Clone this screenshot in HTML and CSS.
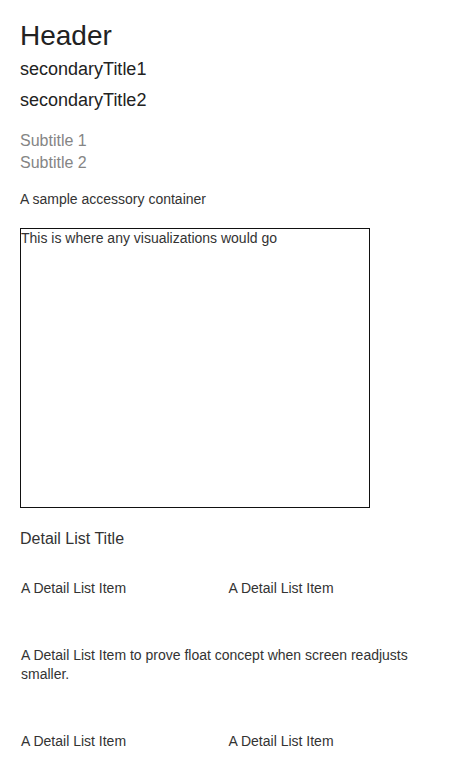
FILE: index.html
```html
<!DOCTYPE html>
<html>
<head>
<meta charset="utf-8">
<link rel="stylesheet" href="styles.css">
</head>
<body>
<div class="page">
  <h1 class="header">Header</h1>
  <h2 class="secondary secondary-first">secondaryTitle1</h2>
  <h2 class="secondary">secondaryTitle2</h2>
  <div class="subtitles">
    <div class="subtitle">Subtitle 1</div>
    <div class="subtitle">Subtitle 2</div>
  </div>
  <div class="accessory">A sample accessory container</div>
  <div class="viz">This is where any visualizations would go</div>
  <h3 class="detail-title">Detail List Title</h3>
  <div class="detail-list">
    <div class="detail-item">A Detail List Item</div>
    <div class="detail-item">A Detail List Item</div>
    <div class="detail-item detail-wide">A Detail List Item to prove float concept when screen readjusts smaller.</div>
    <div class="detail-item">A Detail List Item</div>
    <div class="detail-item">A Detail List Item</div>
  </div>
</div>
</body>
</html>
```

FILE: styles.css
```css
html {
  overflow-y: scroll;
}
html::-webkit-scrollbar {
  width: 15px;
  background: #f1f1f1;
}
html::-webkit-scrollbar-track {
  background: #f1f1f1;
}
html::-webkit-scrollbar-thumb {
  background: #c1c1c1;
  border-left: 2px solid #f1f1f1;
  border-right: 2px solid #f1f1f1;
}
html::-webkit-scrollbar-button:single-button {
  height: 15px;
  background: #f1f1f1;
}
html, body {
  margin: 0;
  padding: 0;
  background: #fff;
}
body {
  font-family: "Liberation Sans", Arial, sans-serif;
  color: #333;
}
.page {
  box-sizing: border-box;
  max-width: 455px;
  padding: 20px 20px 57px 20px;
}
.header {
  font-size: 28px;
  line-height: 32px;
  font-weight: normal;
  color: #222;
  margin: 0 0 7px 0;
}
.secondary {
  font-size: 18px;
  line-height: 21px;
  font-weight: normal;
  color: #222;
  margin: 0;
}
.secondary-first {
  margin-bottom: 10px;
}
.subtitles {
  margin-top: 19px;
}
.subtitle {
  font-size: 16px;
  line-height: 22px;
  color: #858585;
}
.accessory {
  margin-top: 16px;
  font-size: 14px;
  line-height: 19px;
  color: #333;
}
.viz {
  margin-top: 19px;
  width: 348px;
  height: 278px;
  border: 1px solid #111;
  font-size: 14px;
  line-height: 19px;
  color: #333;
}
.detail-title {
  margin: 20px 0 0 0;
  font-size: 16px;
  line-height: 22px;
  font-weight: normal;
  color: #333;
}
.detail-list {
  margin-top: 5px;
  display: grid;
  grid-template-columns: 1fr 1fr;
}
.detail-item {
  padding: 24px 1px;
  font-size: 14px;
  line-height: 19px;
  color: #333;
}
.detail-wide {
  grid-column: 1 / span 2;
}
```
